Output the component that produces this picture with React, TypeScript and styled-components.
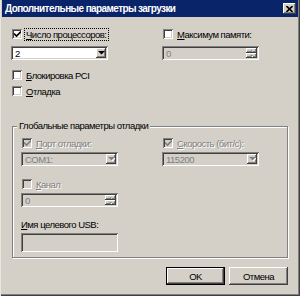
import React from 'react';
import styled, { createGlobalStyle, css } from 'styled-components';

const GlobalStyle = createGlobalStyle`
    html, body {
        margin: 0;
        padding: 0;
        background: #d4d0c8;
    }
    body {
        font-family: "Liberation Sans", Arial, sans-serif;
        font-size: 9.5px;
        letter-spacing: -0.5px;
        color: #000;
    }
    * { box-sizing: border-box; }
`;

const sunken = css`
    box-shadow: inset 1px 1px 0 #808080, inset -1px -1px 0 #fff,
        inset 2px 2px 0 #404040, inset -2px -2px 0 #d4d0c8;
`;

const raised = css`
    box-shadow: inset -1px -1px 0 #404040, inset 1px 1px 0 #fff,
        inset -2px -2px 0 #808080;
`;

const Window = styled.div`
    width: 300px;
    height: 296px;
    background: #d4d0c8;
    padding: 0 2px 2px 2px;
    display: flex;
    flex-direction: column;
    box-shadow: inset 1px 0 0 #e8e6e2, inset -1px -1px 0 #404040, inset -2px -2px 0 #808080;
`;

const TitleBar = styled.div`
    height: 17px;
    flex: none;
    background: #0a246a;
    display: flex;
    align-items: center;
    justify-content: space-between;
    padding: 0 2px 0 3px;
`;

const Title = styled.span`
    color: #fff;
    font-weight: bold;
    font-size: 10px;
    letter-spacing: -0.6px;
`;

const CloseButton = styled.div`
    width: 13px;
    height: 11px;
    background: #d4d0c8;
    ${raised};
    display: flex;
    align-items: center;
    justify-content: center;
`;

const Body = styled.div`
    flex: 1;
    display: flex;
    flex-direction: column;
    padding: 11px 0 0 9px;
`;

const Columns = styled.div<{ $gap: number }>`
    display: grid;
    grid-template-columns: 97px 97px;
    column-gap: ${p => p.$gap}px;
`;

const Stack = styled.div<{ $mt?: number }>`
    display: flex;
    flex-direction: column;
    margin-top: ${p => p.$mt ?? 0}px;
`;

const CheckRow = styled.div<{ $mt?: number; $disabled?: boolean }>`
    height: 12px;
    display: flex;
    align-items: center;
    gap: 3px;
    margin-top: ${p => p.$mt ?? 0}px;
    color: ${p => (p.$disabled ? '#808080' : '#000')};
    text-shadow: ${p => (p.$disabled ? '1px 1px 0 #fff' : 'none')};
    white-space: nowrap;
`;

const Box = styled.div<{ $disabled?: boolean }>`
    width: 10px;
    height: 10px;
    flex: none;
    margin-left: 1px;
    background: ${p => (p.$disabled ? '#d4d0c8' : '#fff')};
    ${sunken};
    display: flex;
    align-items: center;
    justify-content: center;
    text-shadow: none;
`;

const Caption = styled.span<{ $focus?: boolean }>`
    padding: 0 2px 0 1px;
    line-height: 11px;
    ${p =>
        p.$focus &&
        css`
            outline: 1px dotted #000;
            outline-offset: 0;
        `}
    u { text-decoration: underline; text-underline-offset: 1px; }
`;

const Field = styled.div<{ $mt?: number; $disabled?: boolean; $h?: number }>`
    width: 97px;
    height: ${p => p.$h ?? 14}px;
    margin-top: ${p => p.$mt ?? 0}px;
    background: ${p => (p.$disabled ? '#d4d0c8' : '#fff')};
    color: ${p => (p.$disabled ? '#808080' : '#000')};
    ${sunken};
    display: flex;
    align-items: center;
    justify-content: space-between;
    padding: 2px 2px 2px 4px;
`;

const DropButton = styled.div`
    width: 10px;
    height: 10px;
    background: #d4d0c8;
    ${raised};
    display: flex;
    align-items: center;
    justify-content: center;
`;

const SpinButtons = styled.div`
    display: flex;
    flex-direction: column;
    width: 11px;
    height: 10px;
`;

const SpinButton = styled.div`
    flex: 1;
    background: #d4d0c8;
    ${raised};
    display: flex;
    align-items: center;
    justify-content: center;
`;

const Group = styled.div`
    position: relative;
    margin: 29px 0 0 1px;
    width: 276px;
    height: 132px;
    border: 1px solid #808080;
    box-shadow: inset 1px 1px 0 #fff, 1px 1px 0 #fff;
    padding: 10px 0 0 8px;
    display: flex;
    flex-direction: column;
`;

const Legend = styled.span`
    position: absolute;
    left: 4px;
    top: -7px;
    padding: 0 2px;
    background: #d4d0c8;
    line-height: 12px;
    white-space: nowrap;
`;

const Label = styled.div<{ $mt?: number }>`
    height: 12px;
    line-height: 12px;
    margin-top: ${p => p.$mt ?? 0}px;
    u { text-decoration: underline; }
`;

const Footer = styled.div`
    display: flex;
    justify-content: flex-end;
    gap: 4px;
    margin: 9px 10px 0 0;
`;

const Button = styled.div<{ $default?: boolean }>`
    width: 59px;
    height: 18px;
    background: #d4d0c8;
    display: flex;
    align-items: center;
    justify-content: center;
    ${p =>
        p.$default
            ? css`
                  border: 1px solid #000;
                  box-shadow: inset -1px -1px 0 #404040, inset 1px 1px 0 #fff, inset -2px -2px 0 #808080;
              `
            : raised};
`;

const Check = ({ color }: { color: string }) => (
    <svg width="7" height="7" viewBox="0 0 7 7">
        <path d="M0 2.5 L2.5 5 L7 0.5" stroke={color} strokeWidth="1.6" fill="none" />
    </svg>
);

const Arrow = ({ disabled, down = true, w = 7 }: { disabled?: boolean; down?: boolean; w?: number }) => (
    <svg width={w} height={Math.ceil(w / 2)} viewBox={`0 0 ${w} ${Math.ceil(w / 2)}`}>
        {disabled && (
            <path
                d={down ? `M1 1 H${w + 1} L${w / 2 + 1} ${w / 2 + 1} Z` : `M1 ${w / 2 + 1} H${w + 1} L${w / 2 + 1} 1 Z`}
                fill="#fff"
            />
        )}
        <path
            d={down ? `M0 0 H${w} L${w / 2} ${w / 2} Z` : `M0 ${w / 2} H${w} L${w / 2} 0 Z`}
            fill={disabled ? '#808080' : '#000'}
        />
    </svg>
);

const Combo = ({ value, disabled, mt }: { value: string; disabled?: boolean; mt?: number }) => (
    <Field $disabled={disabled} $mt={mt}>
        <span>{value}</span>
        <DropButton>
            <Arrow disabled={disabled} />
        </DropButton>
    </Field>
);

const Spin = ({ value, mt }: { value: string; mt?: number }) => (
    <Field $disabled $mt={mt}>
        <span>{value}</span>
        <SpinButtons>
            <SpinButton>
                <Arrow disabled down={false} w={3} />
            </SpinButton>
            <SpinButton>
                <Arrow disabled w={3} />
            </SpinButton>
        </SpinButtons>
    </Field>
);

interface CheckProps {
    checked?: boolean;
    disabled?: boolean;
    focus?: boolean;
    mt?: number;
    accel: string;
    rest: string;
}

const CheckBox = ({ checked, disabled, focus, mt, accel, rest }: CheckProps) => (
    <CheckRow $mt={mt} $disabled={disabled}>
        <Box $disabled={disabled}>{checked && <Check color={disabled ? '#808080' : '#000'} />}</Box>
        <Caption $focus={focus}>
            <u>{accel}</u>
            {rest}
        </Caption>
    </CheckRow>
);

const App = () => {
    return (
        <>
            <GlobalStyle />
            <Window>
                <TitleBar>
                    <Title>Дополнительные параметры загрузки</Title>
                    <CloseButton>
                        <svg width="7" height="6" viewBox="0 0 7 6">
                            <path d="M0.5 0 L6.5 6 M6.5 0 L0.5 6" stroke="#000" strokeWidth="1.6" />
                        </svg>
                    </CloseButton>
                </TitleBar>
                <Body>
                    <Columns $gap={54}>
                        <Stack>
                            <CheckBox checked focus accel="Ч" rest="исло процессоров:" />
                            <Combo value="2" mt={6} />
                        </Stack>
                        <Stack>
                            <CheckBox accel="М" rest="аксимум памяти:" />
                            <Spin value="0" mt={6} />
                        </Stack>
                    </Columns>
                    <CheckBox mt={9} accel="Б" rest="локировка PCI" />
                    <CheckBox mt={4} accel="О" rest="тладка" />
                    <Group>
                        <Legend>Глобальные параметры отладки</Legend>
                        <Columns $gap={44}>
                            <Stack>
                                <CheckBox checked disabled accel="П" rest="орт отладки:" />
                                <Combo value="COM1:" disabled mt={3} />
                            </Stack>
                            <Stack>
                                <CheckBox checked disabled accel="С" rest="корость (бит/с):" />
                                <Combo value="115200" disabled mt={3} />
                            </Stack>
                        </Columns>
                        <CheckBox mt={12} disabled accel="К" rest="анал" />
                        <Spin value="0" mt={3} />
                        <Label $mt={12}>
                            <u>И</u>мя целевого USB:
                        </Label>
                        <Field $disabled $h={19} $mt={2} />
                    </Group>
                    <Footer>
                        <Button $default>OK</Button>
                        <Button>Отмена</Button>
                    </Footer>
                </Body>
            </Window>
        </>
    );
};

export default App;
